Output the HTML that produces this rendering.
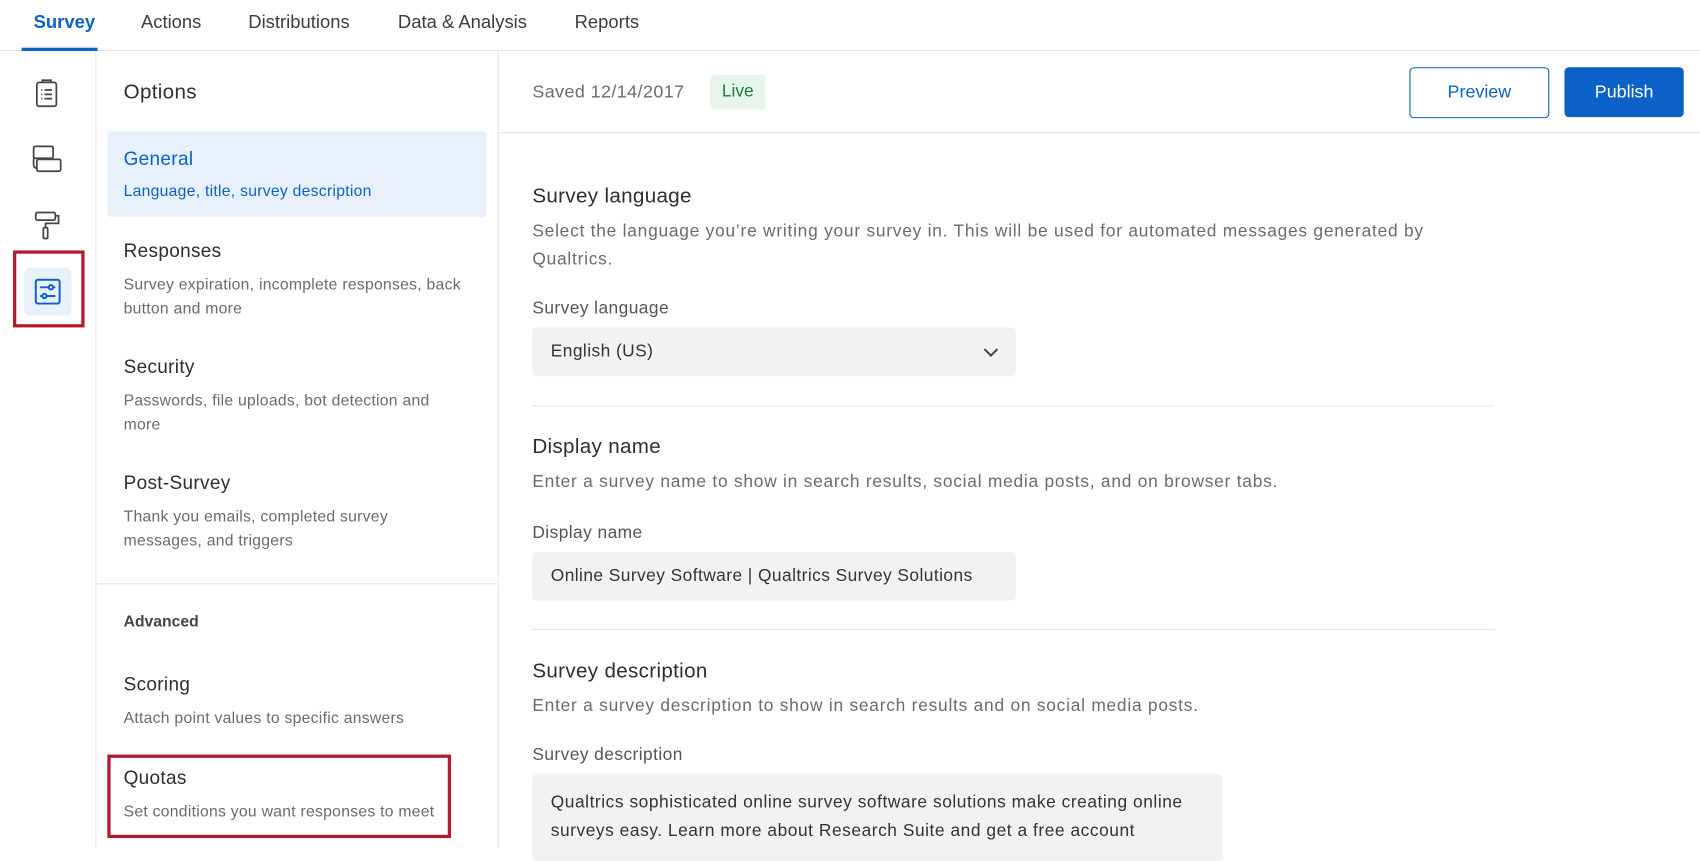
<!DOCTYPE html>
<html><head><meta charset="utf-8"><style>
html,body{margin:0;padding:0;width:1700px;height:848px;overflow:hidden;background:#fff}
#w{position:absolute;left:0;top:0;width:1568px;height:782px;transform:scale(1.08418);transform-origin:0 0;font-family:"Liberation Sans",sans-serif;color:#333}
.a{position:absolute;white-space:nowrap}
.t{font-size:17px;color:#3d3d3d}
.h{font-size:18px;color:#2e2e2e;letter-spacing:0.3px}
.s{font-size:14.5px;color:#6b6b6b;line-height:22px;white-space:normal;letter-spacing:0.25px}
.d{font-size:16px;color:#6b6b6b;line-height:26px;white-space:normal;letter-spacing:0.7px}
.l{font-size:16px;color:#555;letter-spacing:0.4px}
.box{position:absolute;background:#f2f2f2;border-radius:4px}
.hr{position:absolute;height:1px;background:#e4e4e4}
</style></head><body><div id="w">
<div class="a t" style="left:31px;top:11px;color:#0b61c8;font-weight:bold">Survey</div>
<div class="a t" style="left:130px;top:11px">Actions</div>
<div class="a t" style="left:229px;top:11px">Distributions</div>
<div class="a t" style="left:367px;top:11px">Data &amp; Analysis</div>
<div class="a t" style="left:530px;top:11px">Reports</div>
<div class="hr" style="left:0;top:46px;width:1568px"></div>
<div class="a" style="left:20px;top:44px;width:70px;height:3px;background:#0b61c8"></div>
<div class="a" style="left:88px;top:47px;width:1px;height:735px;background:#e4e4e4"></div>
<svg class="a" style="left:30px;top:72px" width="26" height="28" viewBox="0 0 26 28" fill="none" stroke="#444" stroke-width="1.6"><rect x="4" y="4" width="18" height="22" rx="2"/><path d="M9 4V2h8v2"/><path d="M8 11h1M8 15h1M8 19h1M11 11h7M11 15h7M11 19h7"/></svg>
<svg class="a" style="left:29px;top:133px" width="28" height="28" viewBox="0 0 28 28" fill="none" stroke="#444" stroke-width="1.6"><rect x="2" y="2" width="18" height="11" rx="1.5"/><rect x="5" y="14" width="22" height="11" rx="1.5"/><path d="M2 13v6q0 3 3 3"/></svg>
<svg class="a" style="left:31px;top:193px" width="26" height="30" viewBox="0 0 26 30" fill="none" stroke="#444" stroke-width="1.6"><rect x="2" y="3" width="18" height="7" rx="1.5"/><path d="M20 6h3v7H11v4"/><rect x="9" y="17" width="4" height="10" rx="1"/></svg>
<div class="a" style="left:22px;top:247px;width:44px;height:44px;background:#e8f0fb;border-radius:6px"></div>
<svg class="a" style="left:31px;top:256px" width="26" height="26" viewBox="0 0 26 26" fill="none" stroke="#0b61c8" stroke-width="1.8"><rect x="2" y="2" width="22" height="22" rx="2"/><path d="M6 9h8M18 9h2M6 17h2M12 17h8"/><circle cx="16" cy="9" r="2"/><circle cx="10" cy="17" r="2"/></svg>
<div class="a" style="left:12px;top:231px;width:60px;height:65px;border:3px solid #b31b2c"></div>
<div class="a" style="left:459px;top:47px;width:1px;height:735px;background:#e4e4e4"></div>
<div class="a h" style="left:114px;top:75px;font-size:19px">Options</div>
<div class="a" style="left:99px;top:121px;width:350px;height:79px;background:#e8f0fb;border-radius:4px"></div>
<div class="a h" style="left:114px;top:136px;color:#0b61c8;font-size:17.5px">General</div>
<div class="a s" style="left:114px;top:166px;color:#0b61c8">Language, title, survey description</div>
<div class="a h" style="left:114px;top:221px;font-size:17.5px">Responses</div>
<div class="a s" style="left:114px;top:252px;width:320px">Survey expiration, incomplete responses, back button and more</div>
<div class="a h" style="left:114px;top:328px;font-size:17.5px">Security</div>
<div class="a s" style="left:114px;top:359px;width:300px">Passwords, file uploads, bot detection and more</div>
<div class="a h" style="left:114px;top:435px;font-size:17.5px">Post-Survey</div>
<div class="a s" style="left:114px;top:466px;width:280px">Thank you emails, completed survey messages, and triggers</div>
<div class="hr" style="left:89px;top:538px;width:370px"></div>
<div class="a" style="left:114px;top:566px;font-size:14.5px;font-weight:bold;color:#444">Advanced</div>
<div class="a h" style="left:114px;top:621px;font-size:17.5px">Scoring</div>
<div class="a s" style="left:114px;top:652px">Attach point values to specific answers</div>
<div class="a h" style="left:114px;top:707px;font-size:17.5px">Quotas</div>
<div class="a s" style="left:114px;top:738px">Set conditions you want responses to meet</div>
<div class="a" style="left:99px;top:696px;width:311px;height:71px;border:3px solid #b31b2c"></div>
<div class="a" style="left:491px;top:76px;font-size:16.5px;color:#6b6b6b;letter-spacing:0.4px">Saved 12/14/2017</div>
<div class="a" style="left:655px;top:69px;width:51px;height:32px;background:#e6f4ea;border-radius:3px;color:#1e7a3a;font-size:16px;line-height:32px;text-align:center">Live</div>
<div class="a" style="left:1300px;top:62px;width:127px;height:45px;border:1.5px solid #0b61c8;border-radius:4px;color:#0b61c8;font-size:16.5px;line-height:45px;text-align:center">Preview</div>
<div class="a" style="left:1443px;top:62px;width:110px;height:46px;background:#0b61c8;border-radius:4px;color:#fff;font-size:16.5px;line-height:46px;text-align:center">Publish</div>
<div class="hr" style="left:460px;top:122px;width:1108px"></div>
<div class="a h" style="left:491px;top:171px;font-size:19px">Survey language</div>
<div class="a d" style="left:491px;top:201px;width:860px">Select the language you’re writing your survey in. This will be used for automated messages generated by Qualtrics.</div>
<div class="a l" style="left:491px;top:276px">Survey language</div>
<div class="box" style="left:491px;top:302px;width:446px;height:45px"></div>
<div class="a l" style="left:508px;top:316px;color:#333">English (US)</div>
<svg class="a" style="left:907px;top:320px" width="14" height="10" viewBox="0 0 14 10" fill="none" stroke="#444" stroke-width="1.8"><path d="M1 2l6 6 6-6"/></svg>
<div class="hr" style="left:491px;top:374px;width:887px"></div>
<div class="a h" style="left:491px;top:402px;font-size:19px">Display name</div>
<div class="a d" style="left:491px;top:432px;white-space:nowrap">Enter a survey name to show in search results, social media posts, and on browser tabs.</div>
<div class="a l" style="left:491px;top:483px">Display name</div>
<div class="box" style="left:491px;top:509px;width:446px;height:45px"></div>
<div class="a l" style="left:508px;top:523px;color:#333">Online Survey Software | Qualtrics Survey Solutions</div>
<div class="hr" style="left:491px;top:580px;width:887px"></div>
<div class="a h" style="left:491px;top:609px;font-size:19px">Survey description</div>
<div class="a d" style="left:491px;top:639px;white-space:nowrap">Enter a survey description to show in search results and on social media posts.</div>
<div class="a l" style="left:491px;top:688px">Survey description</div>
<div class="box" style="left:491px;top:714px;width:637px;height:80px"></div>
<div class="a d" style="left:508px;top:728px;width:600px;color:#333;letter-spacing:0.5px">Qualtrics sophisticated online survey software solutions make creating online surveys easy. Learn more about Research Suite and get a free account</div>
</div></body></html>
